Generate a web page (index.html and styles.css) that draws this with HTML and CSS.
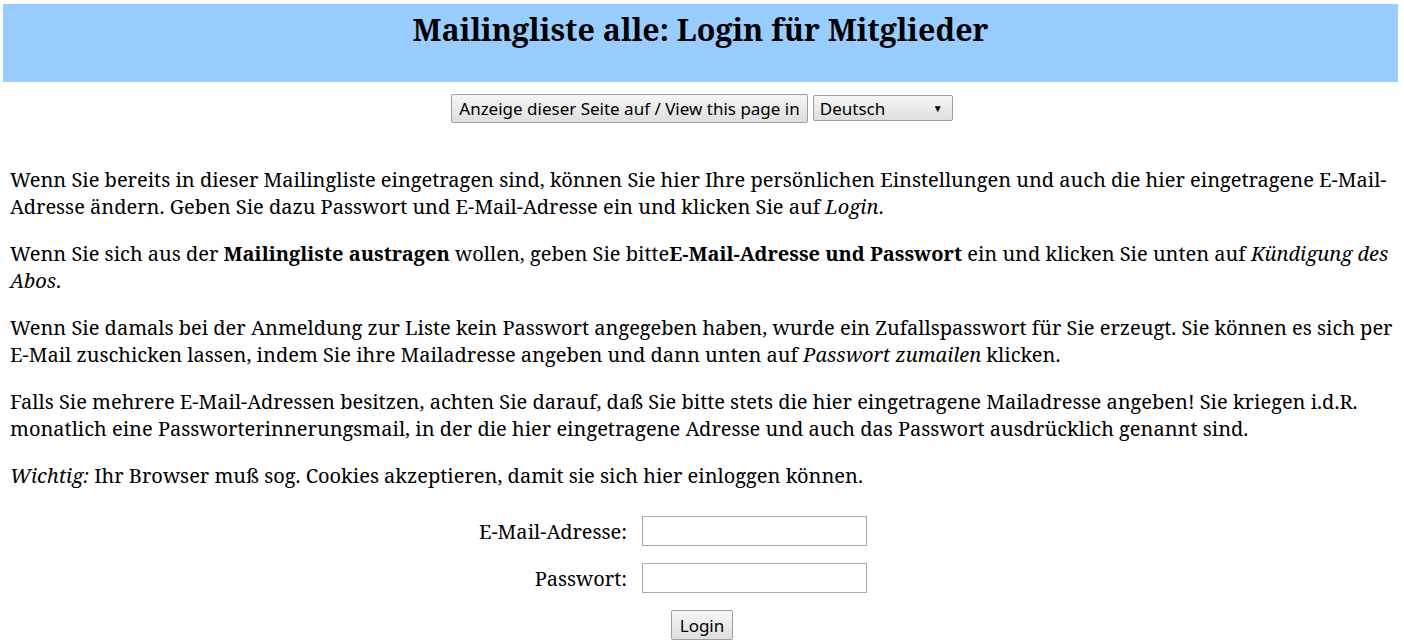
FILE: index.html
```
<!DOCTYPE html>
<html lang="de">
<head>
<meta charset="utf-8">
<title>Mailingliste alle: Login für Mitglieder</title>
<link rel="stylesheet" href="styles.css">
</head>
<body>
<form class="page">
  <div class="banner"><h1>Mailingliste alle: Login für Mitglieder</h1></div>
  <div class="lang">
    <button type="button" class="btn">Anzeige dieser Seite auf / View this page in</button>
    <span class="select">Deutsch<span class="arrow">▼</span></span>
  </div>
  <div class="intro">
    <p>Wenn Sie bereits in dieser Mailingliste eingetragen sind, können Sie hier Ihre persönlichen Einstellungen und auch die hier eingetragene E-Mail-Adresse ändern. Geben Sie dazu Passwort und E-Mail-Adresse ein und klicken Sie auf <em>Login</em>.</p>
    <p>Wenn Sie sich aus der <strong>Mailingliste austragen</strong> wollen, geben Sie bitte<strong>E-Mail-Adresse und Passwort</strong> ein und klicken Sie unten auf <em>Kündigung des Abos</em>.</p>
    <p>Wenn Sie damals bei der Anmeldung zur Liste kein Passwort angegeben haben, wurde ein Zufallspasswort für Sie erzeugt. Sie können es sich per E-Mail zuschicken lassen, indem Sie ihre Mailadresse angeben und dann unten auf <em>Passwort zumailen</em> klicken.</p>
    <p>Falls Sie mehrere E-Mail-Adressen besitzen, achten Sie darauf, daß Sie bitte stets die hier eingetragene Mailadresse angeben! Sie kriegen i.d.R. monatlich eine Passworterinnerungsmail, in der die hier eingetragene Adresse und auch das Passwort ausdrücklich genannt sind.</p>
    <p><em>Wichtig:</em> Ihr Browser muß sog. Cookies akzeptieren, damit sie sich hier einloggen können.</p>
  </div>
  <div class="login">
    <label class="label" for="email">E-Mail-Adresse:</label>
    <input class="field" id="email" type="text">
    <label class="label" for="pw">Passwort:</label>
    <input class="field" id="pw" type="password">
    <div class="submit"><button type="submit" class="btn">Login</button></div>
  </div>
</form>
</body>
</html>
```
FILE: styles.css
```
html, body {
  margin: 0;
  padding: 0;
  background: #fff;
}
body {
  font-family: "Noto Serif", "DejaVu Serif", serif;
  font-size: 20px;
  color: #000;
}
.page {
  display: flex;
  flex-direction: column;
}
.banner {
  margin: 4px 6px 0 3px;
  height: 78px;
  background: #99ccff;
  box-sizing: border-box;
  padding-top: 6px;
}
.banner h1 {
  margin: 0;
  text-align: center;
  font-size: 30.4px;
  font-weight: bold;
  line-height: 40px;
}
.lang {
  display: flex;
  justify-content: center;
  align-items: flex-start;
  gap: 5px;
  margin-top: 12px;
}
.btn {
  font-family: "Noto Sans", "Open Sans", sans-serif;
  font-size: 17px;
  color: #000;
  background: linear-gradient(#f6f6f6, #dedede);
  border: 1px solid #a0a0a0;
  border-radius: 2px;
  padding: 0 7px;
  height: 29px;
  line-height: 27px;
}
.select {
  font-family: "Noto Sans", "Open Sans", sans-serif;
  font-size: 17px;
  display: flex;
  justify-content: space-between;
  align-items: center;
  box-sizing: border-box;
  width: 140px;
  height: 26px;
  margin-top: 1px;
  padding: 0 9px 0 6px;
  background: linear-gradient(#f6f6f6, #dedede);
  border: 1px solid #a0a0a0;
  border-radius: 2px;
}
.arrow {
  font-size: 10px;
}
.intro {
  padding: 43px 10px 0 10px;
}
.intro p {
  margin: 0 0 20px 0;
  line-height: 27px;
}
.login {
  display: grid;
  grid-template-columns: 627px 1fr;
  column-gap: 15px;
  row-gap: 17px;
  align-items: center;
  margin-top: 7px;
}
.label {
  text-align: right;
}
.field {
  width: 225px;
  height: 30px;
  box-sizing: border-box;
  border: 1px solid #a9a9a9;
  border-radius: 0;
  margin: 0;
}
.submit {
  grid-column: 1 / 3;
  display: flex;
  justify-content: center;
}
.submit .btn {
  height: 30px;
  padding: 0 8px;
}
```
